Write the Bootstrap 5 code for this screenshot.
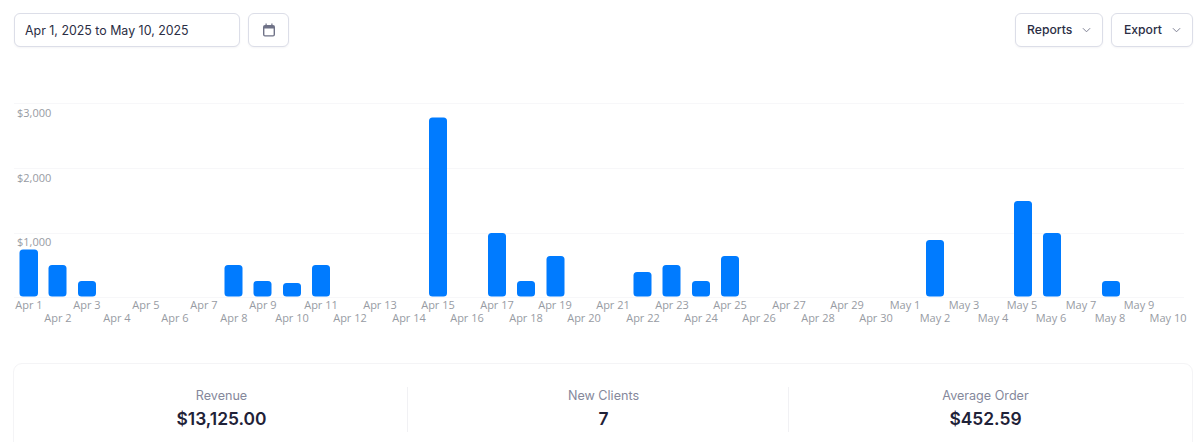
<!DOCTYPE html>
<html lang="en">
<head>
<meta charset="utf-8">
<title>Sales report</title>
<link href="https://cdn.jsdelivr.net/npm/bootstrap@5.3.0/dist/css/bootstrap.min.css" rel="stylesheet">
<style>
html,body{height:442px;overflow:hidden;background:#fff;font-family:"Inter","Liberation Sans",sans-serif;color:#1f2238}
.toolbar{padding:13px 7px 0 14px}
.date-field{width:226px;height:34px;border:1px solid #dcdee8;border-radius:6px;font-size:12.4px;font-weight:400;color:#2b2e44;padding:0 10px;box-shadow:0 1px 2px rgba(30,35,70,.05)}
.tool-btn{height:34px;border:1px solid #dcdee8;border-radius:6px;background:#fff;color:#2b2e44;font-size:12.2px;font-weight:500;box-shadow:0 1px 2px rgba(30,35,70,.05);padding:0 11.5px}
.tool-btn:hover{background:#fff;border-color:#dcdee8}
.cal-btn{width:41px;padding:0}
.chev{color:#7d8093;margin-left:9.5px}
.chart-svg{display:block;margin-top:22px;width:1200px;height:294px}
.chart-svg text{font-family:"Open Sans","Liberation Sans",sans-serif;font-size:11px;fill:#979ba3}
.chart-svg line{stroke:#f7f7f9;stroke-width:1}
.chart-svg rect{fill:#007bff}
.stat-card{margin:0 7px 0 13px;border:1px solid #f4f4f6;border-radius:9px;padding:23px 0 24px 22px;display:grid;grid-template-columns:371px 381px 1fr}
.stat-col{height:45px;text-align:center}
.stat-mid{padding-left:11px}
.stat-end{padding-right:10px}
.stat-col+.stat-col{border-left:1px solid #f1f1f4}
.stat-label{font-size:12.6px;line-height:18px;color:#85889b}
.stat-value{font-size:17.4px;line-height:28px;font-weight:600;color:#1f2238}
</style>
</head>
<body>
<div class="toolbar d-flex justify-content-between">
  <div class="d-flex gap-2">
    <input class="form-control date-field" type="text" value="Apr 1, 2025 to May 10, 2025" aria-label="Date range">
    <button class="btn tool-btn cal-btn d-flex align-items-center justify-content-center" type="button" aria-label="Calendar">
      <svg width="14" height="14" viewBox="0 0 14 14"><path d="M3.5 0.5h1.2V2h4.6V0.5h1.2V2h.5A2 2 0 0 1 13 4v7.5a2 2 0 0 1-2 2H3a2 2 0 0 1-2-2V4a2 2 0 0 1 2-2h.5zM2.4 5.6v5.8a.9.9 0 0 0 .9.9h7.4a.9.9 0 0 0 .9-.9V5.6z" fill="#6f7287" fill-rule="evenodd"/></svg>
    </button>
  </div>
  <div class="d-flex gap-2">
    <button class="btn tool-btn d-flex align-items-center" type="button">Reports<svg class="chev" width="9" height="6" viewBox="0 0 10 6"><path d="M1 1l4 4 4-4" fill="none" stroke="currentColor" stroke-width="1.1"/></svg></button>
    <button class="btn tool-btn d-flex align-items-center" type="button">Export<svg class="chev" width="9" height="6" viewBox="0 0 10 6"><path d="M1 1l4 4 4-4" fill="none" stroke="currentColor" stroke-width="1.1"/></svg></button>
  </div>
</div>

<svg class="chart-svg" viewBox="0 69 1200 294" role="img" aria-label="Revenue per day">
  <line x1="14" x2="1184" y1="103.5" y2="103.5"/>
  <line x1="14" x2="1184" y1="168.5" y2="168.5"/>
  <line x1="14" x2="1184" y1="233.5" y2="233.5"/>
  <line x1="14" x2="1184" y1="297.5" y2="297.5"/>
  <text x="17" y="117">$3,000</text>
  <text x="17" y="182">$2,000</text>
  <text x="17" y="246">$1,000</text>
  <rect x="19.5" y="249.5" width="18.5" height="47" rx="3.5"/>
  <rect x="48.5" y="265" width="18" height="31.5" rx="3.5"/>
  <rect x="78" y="281" width="18" height="15.5" rx="3.5"/>
  <rect x="224.5" y="265" width="18" height="31.5" rx="3.5"/>
  <rect x="253.5" y="281" width="18" height="15.5" rx="3.5"/>
  <rect x="283" y="283" width="18" height="13.5" rx="3.5"/>
  <rect x="312" y="265" width="18" height="31.5" rx="3.5"/>
  <rect x="429" y="117.5" width="18" height="179" rx="3.5"/>
  <rect x="488" y="233" width="18" height="63.5" rx="3.5"/>
  <rect x="517" y="281" width="18" height="15.5" rx="3.5"/>
  <rect x="546.5" y="256" width="18" height="40.5" rx="3.5"/>
  <rect x="633.5" y="272" width="18" height="24.5" rx="3.5"/>
  <rect x="662.5" y="265" width="18" height="31.5" rx="3.5"/>
  <rect x="692" y="281" width="18" height="15.5" rx="3.5"/>
  <rect x="721" y="256" width="18" height="40.5" rx="3.5"/>
  <rect x="926" y="240" width="18" height="56.5" rx="3.5"/>
  <rect x="1014" y="201" width="18" height="95.5" rx="3.5"/>
  <rect x="1043" y="233" width="18" height="63.5" rx="3.5"/>
  <rect x="1102" y="281" width="18" height="15.5" rx="3.5"/>
  <g text-anchor="middle">
    <text x="29" y="309">Apr 1</text><text x="58" y="322">Apr 2</text><text x="87" y="309">Apr 3</text><text x="117" y="322">Apr 4</text><text x="146" y="309">Apr 5</text><text x="175" y="322">Apr 6</text><text x="204" y="309">Apr 7</text><text x="234" y="322">Apr 8</text><text x="263" y="309">Apr 9</text><text x="292" y="322">Apr 10</text>
    <text x="321" y="309">Apr 11</text><text x="350" y="322">Apr 12</text><text x="380" y="309">Apr 13</text><text x="409" y="322">Apr 14</text><text x="438" y="309">Apr 15</text><text x="467" y="322">Apr 16</text><text x="497" y="309">Apr 17</text><text x="526" y="322">Apr 18</text><text x="555" y="309">Apr 19</text><text x="584" y="322">Apr 20</text>
    <text x="613" y="309">Apr 21</text><text x="643" y="322">Apr 22</text><text x="672" y="309">Apr 23</text><text x="701" y="322">Apr 24</text><text x="730" y="309">Apr 25</text><text x="759" y="322">Apr 26</text><text x="789" y="309">Apr 27</text><text x="818" y="322">Apr 28</text><text x="847" y="309">Apr 29</text><text x="876" y="322">Apr 30</text>
    <text x="905" y="309">May 1</text><text x="935" y="322">May 2</text><text x="964" y="309">May 3</text><text x="993" y="322">May 4</text><text x="1022" y="309">May 5</text><text x="1051" y="322">May 6</text><text x="1081" y="309">May 7</text><text x="1110" y="322">May 8</text><text x="1139" y="309">May 9</text><text x="1168" y="322">May 10</text>
  </g>
</svg>

<div class="stat-card">
  <div class="stat-col"><div class="stat-label">Revenue</div><div class="stat-value">$13,125.00</div></div>
  <div class="stat-col stat-mid"><div class="stat-label">New Clients</div><div class="stat-value">7</div></div>
  <div class="stat-col stat-end"><div class="stat-label">Average Order</div><div class="stat-value">$452.59</div></div>
</div>
</body>
</html>
